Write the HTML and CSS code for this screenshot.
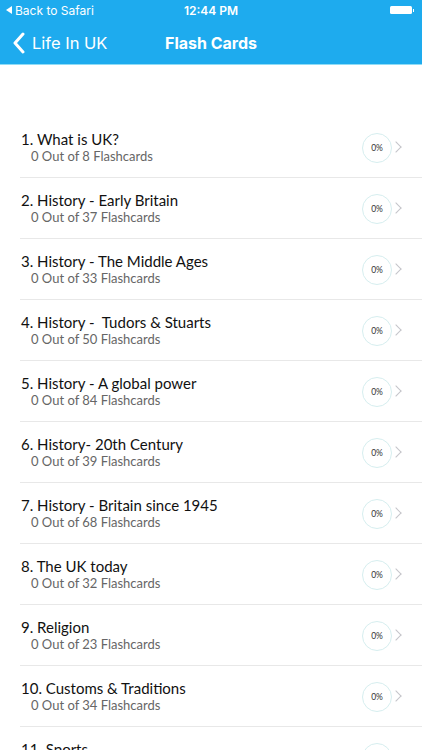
FILE: index.html
```html
<!doctype html>
<html lang="en">
<head>
<meta charset="utf-8">
<meta name="viewport" content="width=device-width, initial-scale=1">
<title>Flash Cards</title>
<link rel="stylesheet" href="styles.css">
</head>
<body>

<div class="top">
    <div class="status">
        <span class="back-app"><i class="tri"></i>Back to Safari</span>
        <span class="clock">12:44 PM</span>
        <span class="battery"><i class="cell"></i><i class="tip"></i></span>
    </div>
    <div class="nav">
        <span class="nav-back">
            <svg width="13" height="22" viewBox="0 0 13 22"><path d="M11 2 L3 11 L11 20" fill="none" stroke="#fff" stroke-width="3" stroke-linecap="round" stroke-linejoin="round"/></svg>
            Life In UK
        </span>
        <span class="nav-title">Flash Cards</span>
    </div>
</div>

<ul class="list">
    <li><div class="txt"><h3>1. What is UK?</h3><p>0 Out of 8 Flashcards</p></div><span class="pct">0%</span><i class="chev"></i></li>
    <li><div class="txt"><h3>2. History - Early Britain</h3><p>0 Out of 37 Flashcards</p></div><span class="pct">0%</span><i class="chev"></i></li>
    <li><div class="txt"><h3>3. History - The Middle Ages</h3><p>0 Out of 33 Flashcards</p></div><span class="pct">0%</span><i class="chev"></i></li>
    <li><div class="txt"><h3>4. History - &nbsp;Tudors &amp; Stuarts</h3><p>0 Out of 50 Flashcards</p></div><span class="pct">0%</span><i class="chev"></i></li>
    <li><div class="txt"><h3>5. History - A global power</h3><p>0 Out of 84 Flashcards</p></div><span class="pct">0%</span><i class="chev"></i></li>
    <li><div class="txt"><h3>6. History- 20th Century</h3><p>0 Out of 39 Flashcards</p></div><span class="pct">0%</span><i class="chev"></i></li>
    <li><div class="txt"><h3>7. History - Britain since 1945</h3><p>0 Out of 68 Flashcards</p></div><span class="pct">0%</span><i class="chev"></i></li>
    <li><div class="txt"><h3>8. The UK today</h3><p>0 Out of 32 Flashcards</p></div><span class="pct">0%</span><i class="chev"></i></li>
    <li><div class="txt"><h3>9. Religion</h3><p>0 Out of 23 Flashcards</p></div><span class="pct">0%</span><i class="chev"></i></li>
    <li><div class="txt"><h3>10. Customs &amp; Traditions</h3><p>0 Out of 34 Flashcards</p></div><span class="pct">0%</span><i class="chev"></i></li>
    <li><div class="txt"><h3>11. Sports</h3><p>0 Out of 20 Flashcards</p></div><span class="pct">0%</span><i class="chev"></i></li>
</ul>

</body>
</html>
```

FILE: styles.css
```css
html, body{
    margin: 0;
    padding: 0;
    background: #fff;
    overflow: hidden;
}
body{
    width: 422px;
    height: 750px;
    font-family: Lato, "Noto Sans", sans-serif;
}
.top{
    background-color: #1eabee;
    border-bottom: 1px solid #8fdcf6;
    color: #fff;
    font-family: Inter, Roboto, sans-serif;
}
.status{
    height: 20px;
    display: flex;
    align-items: center;
    justify-content: space-between;
    padding: 0 8px 0 6px;
    font-size: 12px;
    position: relative;
}
.back-app{
    display: flex;
    align-items: center;
    gap: 3px;
}
.tri{
    width: 0;
    height: 0;
    border-top: 4px solid transparent;
    border-bottom: 4px solid transparent;
    border-right: 6px solid #fff;
}
.clock{
    font-weight: 600;
    position: absolute;
    left: 0;
    right: 0;
    text-align: center;
}
.battery{
    display: flex;
    align-items: center;
}
.cell{
    width: 22px;
    height: 8px;
    background: #fff;
    border-radius: 1.5px;
}
.tip{
    width: 1.5px;
    height: 3px;
    background: #fff;
    margin-left: 1px;
}
.nav{
    height: 42px;
    padding-top: 2px;
    display: flex;
    align-items: center;
    position: relative;
    font-size: 17px;
}
.nav-back{
    display: flex;
    align-items: center;
    gap: 7px;
    padding-left: 12px;
    font-size: 16.5px;
}
.nav-title{
    position: absolute;
    left: 165px;
    font-weight: 700;
    font-size: 16px;
}
.list{
    list-style: none;
    margin: 0;
    padding: 52px 0 0 20px;
}
.list li{
    height: 60px;
    border-bottom: 1px solid #e8e8e8;
    display: flex;
    align-items: center;
    padding-right: 22px;
}
.txt{
    flex: 1;
    padding-left: 1px;
}
.txt h3{
    margin: 0;
    font-size: 15px;
    font-weight: 400;
    color: #111;
    line-height: 18px;
}
.txt p{
    margin: 0 0 0 10px;
    font-size: 13px;
    color: #666;
    line-height: 16px;
}
.pct{
    width: 28px;
    height: 28px;
    border: 1.5px solid #d6eeef;
    border-radius: 50%;
    display: flex;
    align-items: center;
    justify-content: center;
    font-size: 8.5px;
    color: #333;
    margin-top: 2px;
}
.chev{
    width: 7px;
    height: 7px;
    border-top: 1.5px solid #c4c4c9;
    border-right: 1.5px solid #c4c4c9;
    transform: rotate(45deg);
    margin-left: 0;
}
```
